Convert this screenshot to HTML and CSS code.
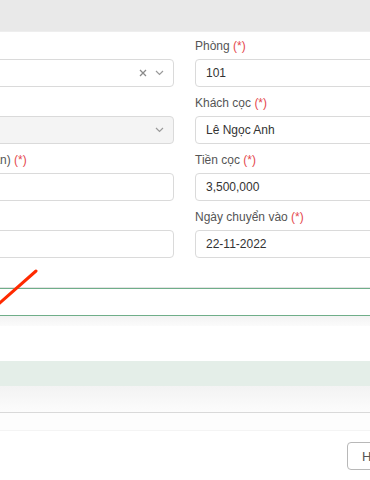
FILE: index.html
```html
<!DOCTYPE html>
<html lang="vi">
<head>
<meta charset="utf-8">
<title>Hợp đồng cọc</title>
<link rel="stylesheet" href="styles.css">
</head>
<body>
<div class="page">
  <div class="modal-header"></div>
  <div class="form-grid">
    <div class="field">
      <label>Tòa nhà <span class="req">(*)</span></label>
      <div class="input select">
        <span class="value"></span>
        <span class="clear">
          <svg width="8" height="8" viewBox="0 0 8 8"><path d="M1 1L7 7M7 1L1 7" stroke="#8a8a8a" stroke-width="1.3" fill="none"/></svg>
        </span>
        <span class="chev">
          <svg width="9" height="6" viewBox="0 0 9 6"><path d="M1 1L4.5 4.5L8 1" stroke="#9a9a9a" stroke-width="1.2" fill="none"/></svg>
        </span>
      </div>
    </div>
    <div class="field">
      <label>Phòng <span class="req">(*)</span></label>
      <div class="input">101</div>
    </div>
    <div class="field">
      <label>Hợp đồng <span class="req">(*)</span></label>
      <div class="input select disabled">
        <span class="value"></span>
        <span class="chev">
          <svg width="9" height="6" viewBox="0 0 9 6"><path d="M1 1L4.5 4.5L8 1" stroke="#9a9a9a" stroke-width="1.2" fill="none"/></svg>
        </span>
      </div>
    </div>
    <div class="field">
      <label>Khách cọc <span class="req">(*)</span></label>
      <div class="input">Lê Ngọc Anh</div>
    </div>
    <div class="field">
      <label>Kỳ thanh toán tiền (số tuần/lần) <span class="req">(*)</span></label>
      <div class="input"></div>
    </div>
    <div class="field">
      <label>Tiền cọc <span class="req">(*)</span></label>
      <div class="input">3,500,000</div>
    </div>
    <div class="field">
      <label>Ghi chú</label>
      <div class="input"></div>
    </div>
    <div class="field">
      <label>Ngày chuyển vào <span class="req">(*)</span></label>
      <div class="input">22-11-2022</div>
    </div>
  </div>

  <div class="tabbar"></div>
  <div class="tab-shadow"></div>

  <div class="table">
    <div class="table-head"></div>
    <div class="table-fade"></div>
    <div class="table-row"></div>
  </div>

  <div class="footer">
    <button class="btn">Hủy</button>
    <button class="btn btn-primary">Lưu</button>
  </div>

  <svg class="annotation" width="370" height="480" viewBox="0 0 370 480">
    <line x1="-6" y1="308" x2="36" y2="271" stroke="#ff2a00" stroke-width="3" stroke-linecap="round"/>
  </svg>
</div>
</body>
</html>
```
FILE: styles.css
```css
html, body {
  margin: 0;
  padding: 0;
  background: #ffffff;
}

body {
  width: 370px;
  height: 480px;
  overflow: hidden;
  font-family: "Liberation Sans", Arial, sans-serif;
  font-size: 12px;
  color: #333;
}

.page {
  position: relative;
  width: 370px;
  height: 480px;
  overflow: hidden;
}

.modal-header {
  height: 31px;
  background: #e9e9e9;
  border-bottom: 1px solid #eeeeee;
}

.form-grid {
  display: grid;
  grid-template-columns: 330px 330px;
  column-gap: 21px;
  margin-left: -156px;
  padding-top: 6px;
}

.field {
  margin-bottom: 8px;
}

.field label {
  display: block;
  font-size: 12px;
  line-height: 16px;
  height: 16px;
  margin-bottom: 5px;
  color: #555;
  white-space: nowrap;
}

.req {
  color: #e5484d;
}

.input {
  box-sizing: border-box;
  height: 28px;
  border: 1px solid #dadada;
  border-radius: 4px;
  padding: 0 10px;
  display: flex;
  align-items: center;
  font-size: 12px;
  color: #333;
  background: #fff;
}

.input.disabled {
  background: #f4f4f4;
}

.select .value {
  flex: 1;
}

.select .clear {
  display: flex;
  margin-right: 8px;
}

.select .chev {
  display: flex;
  margin-right: -1px;
}

.tabbar {
  margin-top: 22px;
  height: 26px;
  border-top: 1px solid #6fae89;
  border-bottom: 1px solid #6fae89;
  box-shadow: 0 -1px 0 #e3e3e3;
}

.tab-shadow {
  height: 10px;
  background: linear-gradient(#f3f3f3, #fbfbfb);
}

.table {
  margin-top: 35px;
}

.table-head {
  height: 25px;
  background: #e4eee8;
}

.table-fade {
  height: 26px;
  background: linear-gradient(#f3f3f3, #fcfcfc);
  border-bottom: 1px solid #d9d9d9;
}

.table-row {
  height: 17px;
  background: #fdfdfd;
  border-bottom: 1px solid #f4f4f4;
}

.footer {
  display: flex;
  gap: 8px;
  padding-top: 11px;
  padding-left: 347px;
}

.btn {
  box-sizing: border-box;
  flex: none;
  height: 28px;
  padding: 0 14px;
  border: 1px solid #b8b8b8;
  border-radius: 4px;
  background: #fff;
  color: #555;
  font-family: "Liberation Sans", Arial, sans-serif;
  font-size: 13px;
}

.btn-primary {
  background: #2e8b57;
  border-color: #2e8b57;
  color: #fff;
}

.annotation {
  position: absolute;
  left: 0;
  top: 0;
  pointer-events: none;
}
```
